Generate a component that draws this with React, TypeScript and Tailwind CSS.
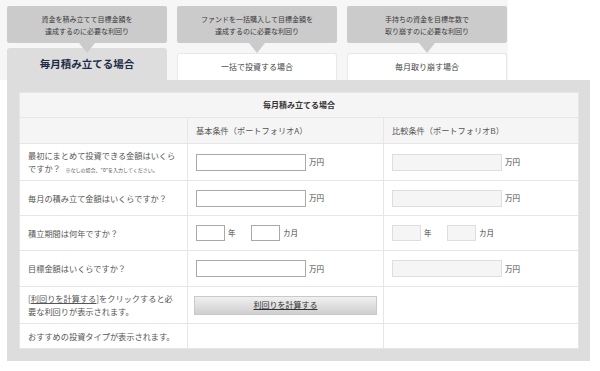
import React from 'react';

const font = { fontFamily: '"Noto Sans CJK JP", "Noto Sans", sans-serif' };

const tabs = [
  { tip: ['資金を積み立てて目標金額を', '達成するのに必要な利回り'], label: '毎月積み立てる場合', active: true },
  { tip: ['ファンドを一括購入して目標金額を', '達成するのに必要な利回り'], label: '一括で投資する場合', active: false },
  { tip: ['手持ちの資金を目標年数で', '取り崩すのに必要な利回り'], label: '毎月取り崩す場合', active: false },
];

function Tab({ tip, label, active }: { tip: string[]; label: string; active: boolean }) {
  return (
    <div className="flex w-[160px] flex-col">
      <div className="relative flex h-[37px] flex-col items-center justify-center rounded-[2px] bg-[#cbcbcb] text-[7px] leading-[12px] text-[#3a3a3a]">
        {tip.map((t) => (
          <span key={t}>{t}</span>
        ))}
        <div className="absolute left-[72px] top-[37px] z-10 h-0 w-0 border-x-[8px] border-t-[10px] border-x-transparent border-t-[#cbcbcb]" />
      </div>
      {active ? (
        <div className="mt-[5px] flex h-[32px] items-center justify-center rounded-t-[3px] bg-[#dddddd] text-[10.5px] font-bold text-[#1c2a48]">
          {label}
        </div>
      ) : (
        <div className="mt-[10px] flex h-[27px] items-center justify-center rounded-t-[3px] border border-b-0 border-[#e8e8e8] bg-white text-[8px] text-[#444]">
          {label}
        </div>
      )}
    </div>
  );
}

function Money({ disabled }: { disabled?: boolean }) {
  return (
    <div className="flex items-center">
      <div
        className={
          disabled
            ? 'h-[17px] w-[110px] border border-[#dedede] bg-[#f5f5f5]'
            : 'h-[17px] w-[110px] border border-[#a9a9a9] bg-white'
        }
      />
      <span className="ml-[3px] text-[7.5px] text-[#444]">万円</span>
    </div>
  );
}

function Period({ disabled }: { disabled?: boolean }) {
  const box = disabled
    ? 'h-[16px] w-[29px] border border-[#dedede] bg-[#f5f5f5]'
    : 'h-[16px] w-[29px] border border-[#a9a9a9] bg-white';
  return (
    <div className="flex items-center text-[7.5px] text-[#444]">
      <div className={box} />
      <span className="ml-[3px] w-[23px]">年</span>
      <div className={box} />
      <span className="ml-[3px]">カ月</span>
    </div>
  );
}

const cell = 'border border-[#e6e6e6] px-[8px] align-middle whitespace-nowrap';

export default function App() {
  return (
    <div className="h-[371px] w-[600px] overflow-hidden bg-white text-[#555]" style={font}>
      <div className="flex w-[508px] gap-[10px] bg-[#f6f6f6] pl-[7px] pt-[6px]">
        {tabs.map((t) => (
          <Tab key={t.label} {...t} />
        ))}
      </div>
      <div className="ml-[7px] w-[583px] bg-[#dddddd] p-[12px]">
        <table className="w-[559px] table-fixed border-collapse bg-white text-[8.2px]">
          <colgroup>
            <col className="w-[168px]" />
            <col className="w-[196px]" />
            <col className="w-[195px]" />
          </colgroup>
          <tbody>
            <tr className="h-[25px] bg-[#f5f5f5]">
              <td colSpan={3} className={`${cell} text-center text-[8px] font-bold text-[#333]`}>
                毎月積み立てる場合
              </td>
            </tr>
            <tr className="h-[26px] bg-[#f5f5f5]">
              <td className={cell} />
              <td className={cell}>基本条件（ポートフォリオA）</td>
              <td className={cell}>比較条件（ポートフォリオB）</td>
            </tr>
            <tr className="h-[37px]">
              <td className={`${cell} leading-[13px]`}>
                最初にまとめて投資できる金額はいくら
                <br />
                ですか？ <span className="ml-[3px] text-[5px]">※なしの場合、"0"を入力してください。</span>
              </td>
              <td className={cell}>
                <Money />
              </td>
              <td className={cell}>
                <Money disabled />
              </td>
            </tr>
            <tr className="h-[35px]">
              <td className={cell}>毎月の積み立て金額はいくらですか？</td>
              <td className={cell}>
                <Money />
              </td>
              <td className={cell}>
                <Money disabled />
              </td>
            </tr>
            <tr className="h-[35px]">
              <td className={cell}>積立期間は何年ですか？</td>
              <td className={cell}>
                <Period />
              </td>
              <td className={cell}>
                <Period disabled />
              </td>
            </tr>
            <tr className="h-[36px]">
              <td className={cell}>目標金額はいくらですか？</td>
              <td className={cell}>
                <Money />
              </td>
              <td className={cell}>
                <Money disabled />
              </td>
            </tr>
            <tr className="h-[37px]">
              <td className={`${cell} leading-[13px]`}>
                [<span className="underline">利回りを計算する</span>]をクリックすると必
                <br />
                要な利回りが表示されます。
              </td>
              <td className={`${cell} pl-[6px]`}>
                <div className="flex h-[19px] w-[183px] items-center justify-center border border-[#c9c9c9] bg-gradient-to-b from-[#f0f0f0] to-[#cfcfcf] text-[8px] text-[#333] underline">
                  利回りを計算する
                </div>
              </td>
              <td className={cell} />
            </tr>
            <tr className="h-[25px]">
              <td className={cell}>おすすめの投資タイプが表示されます。</td>
              <td className={cell} />
              <td className={cell} />
            </tr>
          </tbody>
        </table>
      </div>
    </div>
  );
}
